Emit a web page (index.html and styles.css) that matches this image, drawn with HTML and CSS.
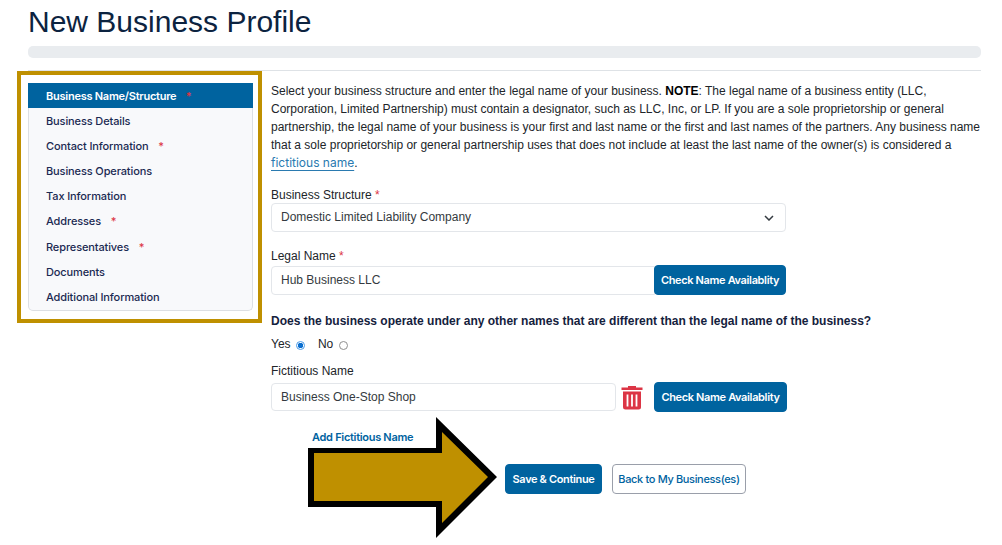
FILE: index.html
```html
<!DOCTYPE html>
<html lang="en">
<head>
    <meta charset="UTF-8">
    <meta name="viewport" content="width=device-width, initial-scale=1.0">
    <title>New Business Profile</title>
    <link rel="stylesheet" href="styles.css">
</head>
<body>
    <header class="page-head">
        <h1>New Business Profile</h1>
        <div class="progress"></div>
    </header>

    <div class="page-body">
        <aside class="side-frame">
            <ul class="side-nav">
                <li class="active">Business Name/Structure <span class="star">*</span></li>
                <li>Business Details</li>
                <li>Contact Information <span class="star">*</span></li>
                <li>Business Operations</li>
                <li>Tax Information</li>
                <li>Addresses <span class="star">*</span></li>
                <li>Representatives <span class="star">*</span></li>
                <li>Documents</li>
                <li>Additional Information</li>
            </ul>
        </aside>

        <main class="content">
            <p class="intro">Select your business structure and enter the legal name of your business. <b>NOTE</b>: The legal name of a business entity (LLC, Corporation, Limited Partnership) must contain a designator, such as LLC, Inc, or LP. If you are a sole proprietorship or general partnership, the legal name of your business is your first and last name or the first and last names of the partners. Any business name that a sole proprietorship or general partnership uses that does not include at least the last name of the owner(s) is considered a <a href="#" class="term">fictitious name</a>.</p>

            <div class="field structure">
                <label>Business Structure <span class="req">*</span></label>
                <div class="input select">
                    Domestic Limited Liability Company
                    <svg width="10" height="6" viewBox="0 0 10 6"><path d="M1 1l4 4 4-4" fill="none" stroke="#343a40" stroke-width="1.5"/></svg>
                </div>
            </div>

            <div class="field legal">
                <label>Legal Name <span class="req">*</span></label>
                <div class="input-row">
                    <div class="input joined">Hub Business LLC</div>
                    <button class="btn joined-btn">Check Name Availablity</button>
                </div>
            </div>

            <p class="question">Does the business operate under any other names that are different than the legal name of the business?</p>
            <div class="radios">
                <label>Yes <span class="radio on"></span></label>
                <label>No <span class="radio"></span></label>
            </div>

            <div class="field fictitious">
                <label>Fictitious Name</label>
                <div class="input-row">
                    <div class="input short">Business One-Stop Shop</div>
                    <svg class="trash" width="22" height="25" viewBox="0 0 22 25">
                        <path d="M7 2.5V1h8v1.5h6.500V5H.5V2.500z" fill="#dc3545"/>
                        <path d="M2 6.500h18V22a2.500 2.500 0 0 1-2.500 2.500h-13A2.500 2.500 0 0 1 2 22z" fill="#dc3545"/>
                        <path d="M6.500 9.500v12M11 9.500v12M15.500 9.500v12" stroke="#fff" stroke-width="1.800"/>
                    </svg>
                    <button class="btn">Check Name Availablity</button>
                </div>
            </div>

            <a href="#" class="add-link">Add Fictitious Name</a>

            <div class="actions">
                <button class="btn save">Save &amp; Continue</button>
                <button class="btn outline">Back to My Business(es)</button>
            </div>
        </main>
    </div>

    <!-- callout arrow drawn over the form -->
    <svg class="callout" width="195" height="127" viewBox="0 0 195 127">
        <path d="M0 31H128V0L189 60 128 121V90H0z" fill="#000"/>
        <path d="M6 36H134V15L180 60 134 106V84H6z" fill="#bf9000"/>
    </svg>
</body>
</html>
```

FILE: styles.css
```css
* {
    box-sizing: border-box;
    margin: 0;
    padding: 0;
}

body {
    position: relative;
    height: 545px;
    overflow: hidden;
    background-color: white;
    color: #212529;
    font-family: "Liberation Sans", Arial, sans-serif;
    font-size: 12px;
    line-height: 18px;
}

.page-head {
    margin: 0 21px 0 28px;
    height: 71px;
    border-bottom: 1px solid #dee2e6;
}

h1 {
    height: 46px;
    color: #0c2340;
    font-size: 30px;
    font-weight: 400;
    line-height: 44px;
}

.progress {
    height: 12px;
    background-color: #e9ecef;
    border-radius: 5px;
}

.page-body {
    display: flex;
    padding-left: 17px;
}

.side-frame {
    width: 245px;
    height: 252px;
    padding: 8px 5px 8px 7px;
    border: 4px solid #bf9000;
    background-color: white;
    flex-shrink: 0;
}

.side-nav {
    list-style: none;
    height: 228px;
    background-color: #f8f9fb;
    border: 1px solid #dcdfe4;
    border-top: none;
    border-radius: 0 0 5px 5px;
    color: #1b2a52;
    font-family: Inter, "Liberation Sans", sans-serif;
    font-size: 11px;
    font-weight: 500;
    letter-spacing: -0.12px;
}

.side-nav li {
    height: 25.100px;
    padding-left: 17px;
    line-height: 27px;
}

.side-nav .active {
    margin: 0 -1px;
    padding-left: 18px;
    background-color: #00639f;
    color: white;
    font-weight: 600;
    letter-spacing: -0.25px;
}

.star {
    margin-left: 7px;
    color: #dc3545;
}

.content {
    width: 711px;
    margin-left: 9px;
    padding-top: 11px;
}

.intro b {
    color: #000;
}

.term {
    color: #2a7ab0;
    font-family: Inter, "Liberation Sans", sans-serif;
    text-decoration: underline;
    text-underline-offset: 3px;
}

.field label {
    display: block;
    height: 18px;
}

.structure label {
    padding-top: 1px;
}

.req {
    color: #dc3545;
}

.structure {
    margin-top: 13px;
}

.legal {
    margin-top: 15px;
}

.input {
    height: 29px;
    padding-left: 9px;
    border: 1px solid #e3e6ea;
    border-radius: 4px;
    color: #343a40;
    line-height: 27px;
}

.select {
    display: flex;
    align-items: center;
    justify-content: space-between;
    width: 515px;
    padding-right: 11px;
}

.input-row {
    display: flex;
    align-items: center;
}

.joined {
    width: 384px;
    border-radius: 4px 0 0 4px;
}

.short {
    width: 345px;
    height: 28px;
    line-height: 26px;
}

.trash {
    margin: 0 11px 0 5px;
}

.btn {
    width: 133px;
    height: 30px;
    background-color: #00639f;
    border: 1px solid #00639f;
    border-radius: 4px;
    color: white;
    font-family: Inter, "Liberation Sans", sans-serif;
    font-size: 11px;
    font-weight: 600;
    letter-spacing: -0.35px;
    white-space: nowrap;
}

.joined-btn {
    width: 132px;
    margin-left: -1px;
}

.question {
    margin-top: 17px;
    color: #14213d;
    font-weight: 700;
}

.radios {
    display: flex;
    gap: 13px;
    margin-top: 5px;
}

.radio {
    display: inline-block;
    width: 9px;
    height: 9px;
    margin-left: 2px;
    border: 1px solid #8f8f8f;
    border-radius: 50%;
    vertical-align: -2px;
}

.radio.on {
    border-color: #4a9be8;
    background: radial-gradient(circle, #0b6fd0 2.500px, white 3px);
}

.fictitious {
    margin-top: 9px;
}

.fictitious label {
    height: 20px;
}

.add-link {
    display: block;
    margin: 16px 0 0 41px;
    color: #00639f;
    font-family: Inter, "Liberation Sans", sans-serif;
    font-size: 11px;
    font-weight: 600;
    letter-spacing: -0.3px;
    text-decoration: none;
}

.actions {
    display: flex;
    gap: 10px;
    margin: 18px 0 0 234px;
}

.save {
    width: 97px;
}

.outline {
    width: 134px;
    background-color: white;
    border-color: #9a9faa;
    color: #00639f;
    font-weight: 500;
}

.callout {
    position: absolute;
    left: 308px;
    top: 417px;
}
```
